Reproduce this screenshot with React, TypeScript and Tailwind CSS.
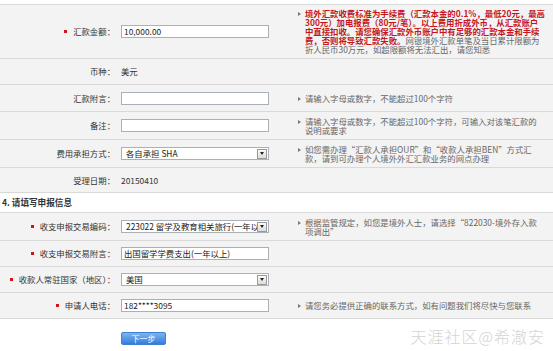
import type { ReactNode } from 'react'

const FONT = { fontFamily: '"Noto Sans CJK SC", "Liberation Sans", sans-serif' }

function Dot() {
  return <span className="inline-block w-[3px] h-[3px] bg-[#d0121b] mr-[6px] align-middle" />
}

function Marker() {
  return (
    <span className="inline-block mt-[3px] w-0 h-0 border-y-[2.5px] border-y-transparent border-l-[3.5px] border-l-[#777] shrink-0" />
  )
}

function Input({ value = '' }: { value?: string }) {
  return (
    <div className="w-[148px] h-[13px] bg-white border border-[#a9b0b8] flex items-center px-[2px] text-[8.4px] text-[#222] leading-[11px] whitespace-nowrap">
      {value}
    </div>
  )
}

function Select({ value }: { value: string }) {
  return (
    <div className="w-[148px] h-[13px] bg-white border border-[#a9b0b8] flex items-center text-[8.4px] text-[#222] leading-[11px]">
      <span className="flex-1 min-w-0 pl-[4px] overflow-x-hidden whitespace-nowrap">{value}</span>
      <span className="w-[10px] h-[10px] mr-[1px] border border-[#9a9a9a] bg-gradient-to-b from-[#fafafa] to-[#dcdcdc] flex items-center justify-center shrink-0">
        <span className="w-0 h-0 border-x-[2.5px] border-x-transparent border-t-[3px] border-t-[#222]" />
      </span>
    </div>
  )
}

function Row({
  label,
  required = false,
  field,
  hint,
  h,
}: {
  label: string
  required?: boolean
  field?: ReactNode
  hint?: ReactNode
  h: string
}) {
  return (
    <div className={`grid grid-cols-[117px_181px_1fr] items-center bg-[#f3f3f3] border-b border-[#d9d9d9] ${h}`}>
      <div className="flex items-center justify-end pr-[2px] text-[8.4px] text-[#333] whitespace-nowrap">
        {required && <Dot />}
        <span>{label}：</span>
      </div>
      <div className="pl-[4px] text-[8.4px] text-[#333]">{field}</div>
      <div className="pr-[8px]">
        {hint && (
          <div className="flex gap-[4px] text-[8.4px] leading-[9px] text-[#666]">
            <Marker />
            <div>{hint}</div>
          </div>
        )}
      </div>
    </div>
  )
}

export default function App() {
  return (
    <div className="w-[553px] h-[351px] bg-white overflow-hidden" style={FONT}>
      <div className="h-[5px] border-b border-[#d9d9d9]" />

      <Row
        h="h-[54px]"
        required
        label="汇款金额"
        field={<Input value="10,000.00" />}
        hint={
          <>
            <span className="text-[#c4161c] font-bold">
              境外汇款收费标准为手续费（汇款本金的0.1%，最低20元，最高300元）加电报费（80元/笔）。以上费用折成外币，从汇款账户中直接扣收。请您确保汇款外币账户中有足够的汇款本金和手续费，否则将导致汇款失败。
            </span>
            网银境外汇款单笔及当日累计限额为折人民币30万元，如超限额将无法汇出，请您知悉
          </>
        }
      />
      <Row h="h-[26px]" label="币种" field={<span>美元</span>} />
      <Row h="h-[27px]" label="汇款附言" field={<Input />} hint="请输入字母或数字，不能超过100个字符" />
      <Row
        h="h-[28px]"
        label="备注"
        field={<Input />}
        hint="请输入字母或数字，不能超过100个字符，可输入对该笔汇款的说明或要求"
      />
      <Row
        h="h-[28px]"
        label="费用承担方式"
        field={<Select value="各自承担 SHA" />}
        hint="如您需办理“汇款人承担OUR”和“收款人承担BEN”方式汇款，请到可办理个人境外外汇汇款业务的网点办理"
      />
      <Row h="h-[25px]" label="受理日期" field={<span>20150410</span>} />

      <div className="h-[20px] flex items-center pl-[2px] border-b border-[#d9d9d9] text-[8.6px] font-bold text-[#333]">
        4. 请填写申报信息
      </div>

      <Row
        h="h-[28px]"
        required
        label="收支申报交易编码"
        field={<Select value="223022 留学及教育相关旅行(一年以上)" />}
        hint="根据监管规定，如您是境外人士，请选择“822030-境外存入款项调出”"
      />
      <Row h="h-[26px]" required label="收支申报交易附言" field={<Input value="出国留学学费支出(一年以上)" />} />
      <Row h="h-[26px]" required label="收款人常驻国家（地区）" field={<Select value="美国" />} />
      <Row
        h="h-[26px]"
        required
        label="申请人电话"
        field={<Input value="182****3095" />}
        hint="请您务必提供正确的联系方式，如有问题我们将尽快与您联系"
      />

      <div className="flex items-start">
        <div className="w-[121px]" />
        <button className="mt-[13px] w-[45px] h-[13px] rounded-[2px] border border-[#3d7fd0] bg-gradient-to-b from-[#7db4f0] to-[#2f7edb] text-white text-[8px] leading-none">
          下一步
        </button>
        <div className="ml-auto mr-[8px] mt-[5px] text-[16px] text-[#d4d4d4] font-light tracking-[1px]">
          天涯社区@希澈安
        </div>
      </div>
    </div>
  )
}
